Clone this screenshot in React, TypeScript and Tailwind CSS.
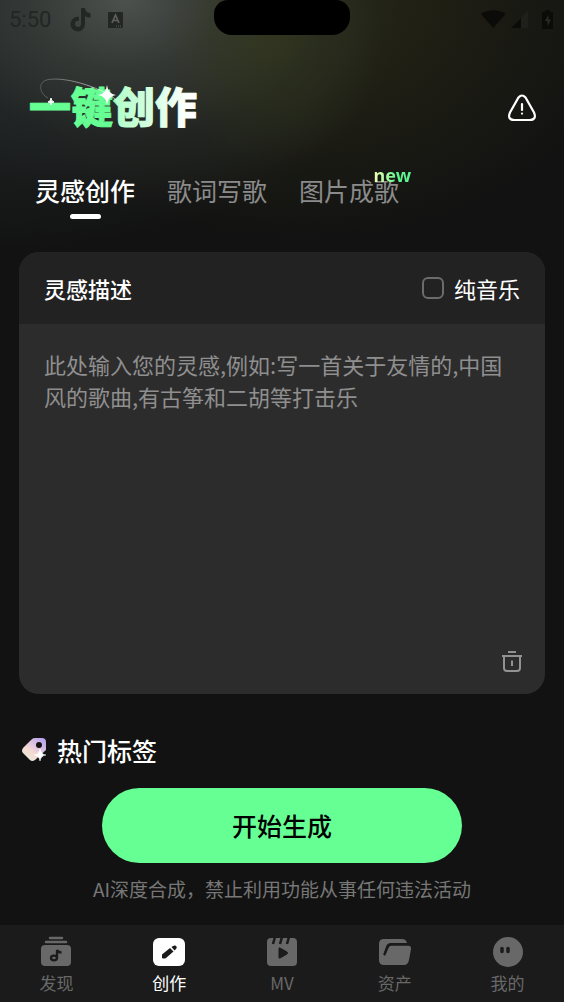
import { useState } from "react";
import type { ReactNode } from "react";

const tabs = [
    { id: "idea", label: "灵感创作" },
    { id: "lyrics", label: "歌词写歌" },
    { id: "picture", label: "图片成歌", isNew: true },
];

function StatusBar() {
    return (
        <div className="relative flex h-10 items-center justify-between px-2 text-[#232625]">
            <div className="flex items-center">
                <span className="ml-px w-[60px] font-['Roboto',sans-serif] text-[22px] leading-6">5:50</span>
                <svg className="ml-px" width="22" height="24" viewBox="0 0 22 24" fill="currentColor">
                    <path d="M11 0h4c.3 3 2 5 5.500 5.300v4.200c-2 0-4-.6-5.500-1.600V16a7.300 7.300 0 1 1-7.300-7.200h1.200v4.300A3 3 0 1 0 11 16z" />
                </svg>
                <svg className="ml-4" width="16" height="16" viewBox="0 0 16 16">
                    <rect width="15" height="16" rx="1" fill="currentColor" />
                    <path d="M4 11 7.500 3 11 11M5.300 8.500h4.400" fill="none" stroke="#5c605d" strokeWidth="1.700" />
                    <path d="M8 14.200h1M10 14.200h1M12 14.200h1" stroke="#5c605d" />
                </svg>
            </div>
            <div className="absolute left-1/2 top-0 h-[35px] w-[136px] -translate-x-1/2 rounded-b-[18px] rounded-t-[14px] bg-black" />
            <div className="flex items-center gap-1 text-[#0b0b09]">
                <svg width="25" height="20" viewBox="0 0 25 20" fill="currentColor">
                    <path d="M0 4C7-1 18-1 24.500 4L12.300 18z" />
                </svg>
                <svg width="20" height="20" viewBox="0 0 20 20">
                    <path d="M18 1v17H1z" fill="#20201a" />
                    <path d="M11 8v10H1z" fill="currentColor" />
                </svg>
                <svg className="ml-2" width="14" height="20" viewBox="0 0 14 20">
                    <path d="M3 0h5v2h3v17H0V2h3z" fill="currentColor" />
                    <path d="M6.500 5 3 11h2.500v5L9 9.500H6.500z" fill="#2b2b25" />
                </svg>
            </div>
        </div>
    );
}

function Logo() {
    return (
        <h1>
            <svg className="block overflow-visible" width="172" height="56" viewBox="0 0 172 56" fill="none">
                <defs>
                    <linearGradient id="logo" gradientUnits="userSpaceOnUse" x1="0" y1="0" x2="172" y2="0">
                        <stop offset=".48" stopColor="#66ff94" />
                        <stop offset=".52" stopColor="#b4ffca" />
                        <stop offset=".75" stopColor="#dcffe6" />
                        <stop offset=".95" stopColor="#fff" />
                    </linearGradient>
                    <linearGradient id="orbit" x1="0" y1="0" x2="1" y2="0">
                        <stop offset="0" stopColor="#fff" stopOpacity=".2" />
                        <stop offset="1" stopColor="#fff" stopOpacity=".7" />
                    </linearGradient>
                </defs>
                <text
                    x="1"
                    y="47"
                    fill="url(#logo)"
                    stroke="url(#logo)"
                    strokeWidth="1"
                    strokeLinejoin="round"
                    className="font-['Noto_Sans_CJK_SC',sans-serif] text-[42px] font-black"
                >
                    一键创作
                </text>
                <path d="M20 22C12 18 10 8 17 4.500c10-4 38 0 66 15L89 25" stroke="url(#orbit)" />
                <path d="M79 9q1 9 9 10q-8 1-9 10q-1-9-9-10q8-1 9-10z" fill="#fff" />
                <path d="M23 22q0 3 3 4q-3 0-3 3q0-3-3-3q3-1 3-4z" fill="#fff" stroke="#fff" />
            </svg>
        </h1>
    );
}

function TagIcon() {
    return (
        <svg width="26" height="26" viewBox="0 0 26 26">
            <defs>
                <linearGradient id="tag" x1=".1" y1="1" x2=".9" y2="0">
                    <stop offset="0" stopColor="#e3f0dc" />
                    <stop offset=".4" stopColor="#f5d9d3" />
                    <stop offset="1" stopColor="#b3a0f0" />
                </linearGradient>
            </defs>
            <path d="M14 1h7q4 0 4 4v8L14 23q-3 2-5 0L2 16q-2-2 0-5l8-8q1.500-2 4-2z" fill="url(#tag)" />
            <circle cx="18" cy="8" r="3" fill="#121212" />
            <path d="M19 12q1 5.500 6 6q-5 .5-6 6q-1-5.500-6-6q5-.5 6-6z" fill="#fff" stroke="#fff" strokeWidth=".5" />
        </svg>
    );
}

const navItems: { label: string; icon: ReactNode }[] = [
    {
        label: "发现",
        icon: (
            <>
                <path d="M10 2h12M6 6h20" stroke="currentColor" strokeWidth="2.500" strokeLinecap="round" />
                <rect x="1" y="9" width="30" height="21" rx="4" fill="currentColor" />
                <path d="M17 22V14q1 2.500 4.500 2.500" fill="none" stroke="#1b1b1b" strokeWidth="2.300" />
                <ellipse cx="14" cy="22" rx="3" ry="2.300" fill="none" stroke="#1b1b1b" strokeWidth="2.300" />
            </>
        ),
    },
    {
        label: "创作",
        icon: (
            <>
                <rect y="2" width="32" height="28" rx="6" fill="currentColor" />
                <path d="M9 22v-3.500L17 12l3.500 3.500L13 22q-2 1-4 0zM18.500 11l1.500-1q2.500-1 3.500.5t-1 3L21.500 14.500z" fill="#1b1b1b" />
            </>
        ),
    },
    {
        label: "MV",
        icon: (
            <>
                <path d="M1 6q0-4 4-4h22q4 0 4 4v20q0 4-4 4H5q-4 0-4-4z" fill="currentColor" />
                <path d="M9 1 7 8M16 1l-2 7M23 1l-2 7" stroke="#1b1b1b" strokeWidth="2.500" />
                <path d="M13 12.500v9q0 1 1 .5l7-4q1-1 0-2l-7-4q-1-.5-1 .5z" fill="#1b1b1b" stroke="#1b1b1b" strokeLinejoin="round" />
            </>
        ),
    },
    {
        label: "资产",
        icon: (
            <>
                <path d="M5 3h18q4 0 5 4H12q-4 0-5 4L4.500 18l2 1L9.500 12q1-2.500 3-2.500h16q4 0 3.500 3.500l-2 11q-1 5-5 5H5q-5 0-5-5V8q0-5 5-5z" fill="currentColor" />
                <path d="M5.500 18.500 8 11.500q1-3 4-3h18" fill="none" stroke="#1b1b1b" strokeWidth="2.200" strokeLinecap="round" />
            </>
        ),
    },
    {
        label: "我的",
        icon: (
            <>
                <circle cx="16" cy="16" r="15" fill="currentColor" />
                <path d="M10 12.500v3M16 12.500v3" stroke="#1b1b1b" strokeWidth="3.500" strokeLinecap="round" />
            </>
        ),
    },
];

function App() {
    const [tab, setTab] = useState("idea");
    const [nav, setNav] = useState("创作");
    const [text, setText] = useState("");

    return (
        <div className="flex min-h-screen flex-col bg-[#121212] bg-[radial-gradient(ellipse_110px_130px_at_270px_35px,#363b1890,transparent),radial-gradient(ellipse_280px_200px_at_125px_0px,#4c514e,#383c39c0_35%,#24282770_70%,transparent),radial-gradient(ellipse_400px_230px_at_0px_20px,#2e3637c0,transparent),radial-gradient(ellipse_330px_240px_at_300px_0px,#282816,transparent)] bg-no-repeat font-['Noto_Sans_CJK_SC',sans-serif] text-white">
            <StatusBar />

            <header className="mt-9 flex items-center justify-between px-7">
                <Logo />
                <button type="button" aria-label="提示" className="mt-2">
                    <svg width="28" height="28" viewBox="0 0 28 28" fill="none" stroke="currentColor" strokeWidth="2.200" strokeLinecap="round">
                        <path d="M10.500 3.500q3.500-4 7 0l8.500 15q3 7-4 7.500H6q-7-.5-4-7.500z" />
                        <path d="M14 10v6M14 19.500v.1" />
                    </svg>
                </button>
            </header>

            <nav className="mt-10 flex gap-8 px-[35px]">
                {tabs.map((item) => (
                    <button
                        key={item.id}
                        type="button"
                        onClick={() => setTab(item.id)}
                        className={`relative flex flex-col items-center text-[25px] leading-9 ${tab === item.id ? "font-medium text-white" : "text-[#8b8b8b]"}`}
                    >
                        {item.label}
                        {tab === item.id && <span className="mt-[6px] h-[5px] w-[31px] rounded-sm bg-white" />}
                        {item.isNew && (
                            <span className="absolute -right-3 -top-[7px] bg-gradient-to-r from-[#f0ffb0] to-[#5cf590] to-60% bg-clip-text font-['Noto_Sans',sans-serif] text-lg font-bold leading-5 text-transparent">
                                new
                            </span>
                        )}
                    </button>
                ))}
            </nav>

            <main className="flex flex-1 flex-col px-5">
                <section className="-mx-px mt-[33px] overflow-hidden rounded-[20px] bg-[#2c2c2c]">
                    <div className="flex h-[72px] items-center justify-between bg-[#222] px-[25px] text-[22px]">
                        <label htmlFor="idea" className="font-medium">灵感描述</label>
                        <label className="flex items-center gap-[10px]">
                            <input type="checkbox" className="size-[22px] appearance-none rounded-md border-2 border-[#6b6b6b] checked:bg-[#66ff94]" />
                            纯音乐
                        </label>
                    </div>
                    <textarea
                        id="idea"
                        value={text}
                        onChange={(e) => setText(e.target.value)}
                        placeholder="此处输入您的灵感,例如:写一首关于友情的,中国风的歌曲,有古筝和二胡等打击乐"
                        className="block h-[310px] w-full resize-none px-[25px] pt-6 text-[22px] leading-8 outline-none placeholder:text-[#8f8f8f]"
                    />
                    <div className="flex h-[60px] items-start justify-end px-[22px] pt-4">
                        <button type="button" aria-label="清空" onClick={() => setText("")} className="text-[#929292]">
                            <svg width="22" height="24" viewBox="0 0 22 24" fill="none" stroke="currentColor" strokeWidth="2">
                                <path d="M7 2h8M1 6h20M3 6v12q0 3 3 3h10q3 0 3-3V6M11 10.500V16" />
                            </svg>
                        </button>
                    </div>
                </section>

                <h2 className="mt-[38px] flex items-center gap-[10px] px-px text-[25px] font-medium leading-9">
                    <TagIcon />
                    热门标签
                </h2>

                <button type="button" className="mx-auto mt-5 h-[75px] w-full max-w-[360px] rounded-full bg-[#66ff94] text-[25px] font-medium text-black">
                    开始生成
                </button>
                <p className="mt-3 text-center text-[19px] leading-7 text-[#777]">AI深度合成，禁止利用功能从事任何违法活动</p>
            </main>

            <footer className="mt-4 grid h-[77px] grid-cols-5 bg-[#1b1b1b]">
                {navItems.map((item) => (
                    <button
                        key={item.label}
                        type="button"
                        onClick={() => setNav(item.label)}
                        className={`flex flex-col items-center justify-start pt-[11px] text-[17px] leading-6 ${nav === item.label ? "text-white" : "text-[#686868]"}`}
                    >
                        <svg className="mb-[3px] overflow-visible" width="32" height="32" viewBox="0 0 32 32">{item.icon}</svg>
                        {item.label}
                    </button>
                ))}
            </footer>
        </div>
    );
}

export default App;
